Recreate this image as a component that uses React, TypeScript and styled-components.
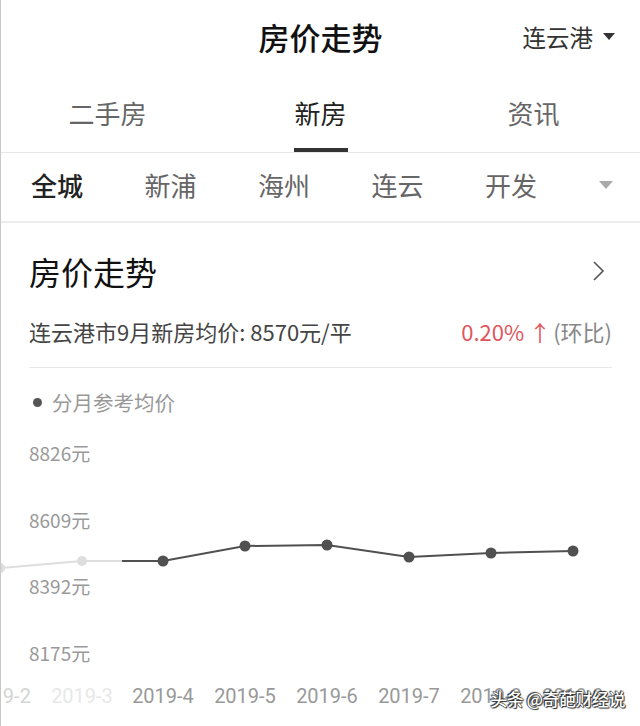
import React from "react";
import styled, { createGlobalStyle } from "styled-components";

const GlobalStyle = createGlobalStyle`
  html, body {
    margin: 0;
    padding: 0;
    background: #ffffff;
  }
  body {
    font-family: "Noto Sans CJK SC", "Noto Sans", sans-serif;
  }
`;

const Page = styled.div`
  position: relative;
  width: 640px;
  height: 726px;
  overflow: hidden;
  background: #ffffff;
  border-left: 1px solid #c8c8c8;
  box-sizing: border-box;
`;

const Header = styled.header`
  display: grid;
  grid-template-columns: 1fr auto 1fr;
  align-items: center;
  height: 76px;
  padding-bottom: 3px;
  box-sizing: border-box;
`;

const HeaderTitle = styled.h1`
  grid-column: 2;
  margin: 0;
  font-size: 31px;
  font-weight: 500;
  color: #111;
`;

const CityPicker = styled.div`
  justify-self: end;
  display: flex;
  align-items: center;
  gap: 10px;
  padding-right: 25px;
  font-size: 23.5px;
  color: #333;
`;

const Caret = styled.span<{ $color: string; $size: number }>`
  width: 0;
  height: 0;
  border-left: ${(p) => p.$size}px solid transparent;
  border-right: ${(p) => p.$size}px solid transparent;
  border-top: ${(p) => p.$size + 1}px solid ${(p) => p.$color};
`;

const Tabs = styled.nav`
  display: grid;
  grid-template-columns: repeat(3, 1fr);
  height: 76px;
  border-bottom: 1px solid #e6e6e6;
`;

const Tab = styled.div<{ $active?: boolean }>`
  position: relative;
  display: flex;
  align-items: center;
  justify-content: center;
  padding-bottom: 4px;
  font-size: 26px;
  color: ${(p) => (p.$active ? "#222" : "#666")};

  &::after {
    content: "";
    display: ${(p) => (p.$active ? "block" : "none")};
    position: absolute;
    bottom: 0;
    left: 50%;
    width: 54px;
    height: 4px;
    margin-left: -27px;
    background: #333;
  }
`;

const Districts = styled.div`
  display: flex;
  align-items: center;
  height: 70px;
  padding: 0 33px 5px 30px;
  box-sizing: border-box;
  border-bottom: 2px solid #ededed;
`;

const District = styled.span<{ $active?: boolean }>`
  flex-shrink: 0;
  white-space: nowrap;
  margin-right: 61.5px;
  font-size: 26px;
  font-weight: ${(p) => (p.$active ? 500 : 400)};
  color: ${(p) => (p.$active ? "#222" : "#666")};
`;

const MoreToggle = styled.div`
  margin-left: auto;
  display: flex;
  align-items: center;
`;

const Card = styled.section`
  padding: 0 28px;
`;

const CardHead = styled.div`
  display: flex;
  align-items: center;
  justify-content: space-between;
  height: 96px;
`;

const CardTitle = styled.h2`
  margin: 0;
  font-size: 32px;
  font-weight: 400;
  color: #111;
`;

const Chevron = styled.svg`
  width: 24px;
  height: 24px;
  margin-right: 2px;
`;

const Summary = styled.div`
  display: flex;
  align-items: center;
  justify-content: space-between;
  height: 24px;
  padding-bottom: 24px;
  border-bottom: 1px solid #e8e8e8;
  font-size: 22px;
  color: #444;
`;

const Change = styled.span`
  display: flex;
  align-items: center;
  color: #888;
`;

const Rise = styled.span`
  color: #e0565c;
  margin-right: 2px;
`;

const Legend = styled.div`
  display: flex;
  align-items: center;
  gap: 10px;
  height: 24px;
  padding: 22px 0 17px 4px;
  font-size: 20.5px;
  color: #999;
`;

const Dot = styled.span`
  width: 9px;
  height: 9px;
  border-radius: 50%;
  background: #555;
`;

const ChartWrap = styled.div`
  position: relative;
  height: 296px;
`;

const Watermark = styled.span`
  position: absolute;
  right: 15px;
  top: 255px;
  font-size: 17px;
  font-weight: 500;
  color: #ffffff;
  letter-spacing: -0.5px;
  text-shadow: 0 0 1px #222, 0 0 1px #222, 1px 1px 1px #333, -1px -1px 1px #333;
`;

const yLabels = [
  { y: 25, text: "8826元" },
  { y: 92, text: "8609元" },
  { y: 158, text: "8392元" },
  { y: 225, text: "8175元" },
];

const points = [
  { x: -1, y: 137, label: "2019-2", color: "#d4d4d4" },
  { x: 81, y: 130, label: "2019-3", color: "#e8e8e8" },
  { x: 162, y: 130, label: "2019-4", color: "#999" },
  { x: 244, y: 115, label: "2019-5", color: "#999" },
  { x: 326, y: 114, label: "2019-6", color: "#999" },
  { x: 408, y: 126, label: "2019-7", color: "#999" },
  { x: 490, y: 122, label: "2019-8", color: "#999" },
  { x: 572, y: 120, label: "2019-9", color: "#999" },
];

const PriceChart: React.FC = () => {
  const dark = points.slice(2);
  const darkPath =
    `M121 130 ` + dark.map((p) => `L${p.x} ${p.y}`).join(" ");
  return (
    <svg width="639" height="296" viewBox="0 0 639 296">
      {yLabels.map((l) => (
        <text
          key={l.text}
          x="28"
          y={l.y}
          fontSize="19"
          fill="#999"
          dominantBaseline="middle"
          fontFamily="Noto Sans CJK SC, sans-serif"
        >
          {l.text}
        </text>
      ))}
      <path d="M-1 137 L81 130 L121 130" fill="none" stroke="#dedede" strokeWidth="2" />
      <circle cx="81" cy="130" r="5" fill="#dedede" />
      <circle cx="-1" cy="137" r="5" fill="#dedede" />
      <path d={darkPath} fill="none" stroke="#505050" strokeWidth="2" />
      {dark.map((p) => (
        <circle key={p.label} cx={p.x} cy={p.y} r="5.5" fill="#505050" />
      ))}
      {points.map((p) => (
        <text
          key={p.label}
          x={p.x}
          y="267"
          fontSize="20"
          fill={p.color}
          textAnchor="middle"
          dominantBaseline="middle"
          fontFamily="Roboto, sans-serif"
        >
          {p.label}
        </text>
      ))}
    </svg>
  );
};

const App: React.FC = () => {
  return (
    <Page>
      <GlobalStyle />
      <Header>
        <HeaderTitle>房价走势</HeaderTitle>
        <CityPicker>
          连云港
          <Caret $color="#333" $size={6} />
        </CityPicker>
      </Header>
      <Tabs>
        <Tab>二手房</Tab>
        <Tab $active>新房</Tab>
        <Tab>资讯</Tab>
      </Tabs>
      <Districts>
        <District $active>全城</District>
        <District>新浦</District>
        <District>海州</District>
        <District>连云</District>
        <District>开发</District>
        <MoreToggle>
          <Caret $color="#aaa" $size={7} />
        </MoreToggle>
      </Districts>
      <Card>
        <CardHead>
          <CardTitle>房价走势</CardTitle>
          <Chevron viewBox="0 0 24 24" fill="none" stroke="#555" strokeWidth="1.6">
            <path d="M8 3 L17 12 L8 21" />
          </Chevron>
        </CardHead>
        <Summary>
          <span>连云港市9月新房均价: 8570元/平</span>
          <Change>
            <Rise>0.20% ↑</Rise>(环比)
          </Change>
        </Summary>
        <Legend>
          <Dot />
          分月参考均价
        </Legend>
      </Card>
      <ChartWrap>
        <PriceChart />
        <Watermark>头条 @奇葩财经说</Watermark>
      </ChartWrap>
    </Page>
  );
};

export default App;
